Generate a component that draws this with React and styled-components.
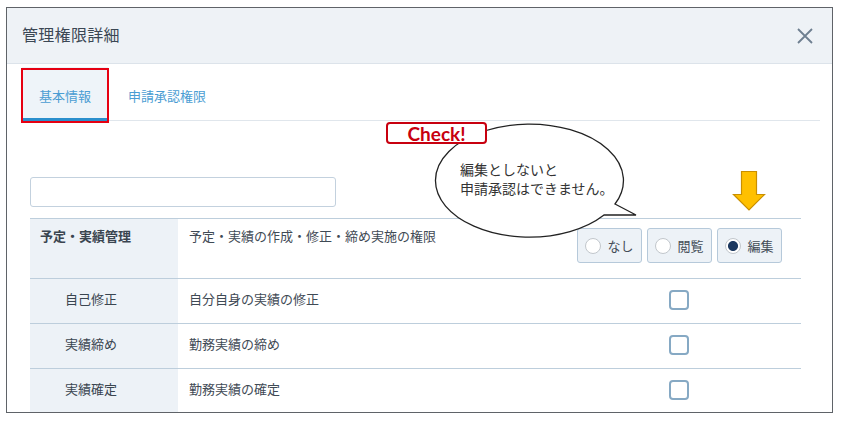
import styled, { createGlobalStyle } from 'styled-components'

const GlobalStyle = createGlobalStyle`
  html, body {
    margin: 0;
    padding: 0;
    background: #ffffff;
  }
  body {
    font-family: "Noto Sans CJK JP", "Noto Sans", sans-serif;
    color: #3f4a55;
  }
  * { box-sizing: border-box; }
`

const rows = [
  { name: '自己修正', desc: '自分自身の実績の修正' },
  { name: '実績締め', desc: '勤務実績の締め' },
  { name: '実績確定', desc: '勤務実績の確定' },
]

const radios = [
  { label: 'なし', checked: false },
  { label: '閲覧', checked: false },
  { label: '編集', checked: true },
]

export default function App() {
  return (
    <Stage>
      <GlobalStyle />
      <Frame>
        <Header>
          <Title>管理権限詳細</Title>
          <Close aria-label="close">
            <svg width="16" height="16" viewBox="0 0 16 16">
              <path d="M1 1L15 15M15 1L1 15" stroke="#6e7f90" strokeWidth="1.8" fill="none" />
            </svg>
          </Close>
        </Header>
        <TabBar>
          <Tab $active>基本情報</Tab>
          <Tab>申請承認権限</Tab>
        </TabBar>
        <Content>
          <SearchInput />
          <Table>
            <Row $tall>
              <NameCell $bold>予定・実績管理</NameCell>
              <DescCell $top>予定・実績の作成・修正・締め実施の権限</DescCell>
              <ControlCell $top>
                <RadioGroup>
                  {radios.map((r) => (
                    <RadioButton key={r.label}>
                      <RadioDot $checked={r.checked} />
                      {r.label}
                    </RadioButton>
                  ))}
                </RadioGroup>
              </ControlCell>
            </Row>
            {rows.map((r) => (
              <Row key={r.name}>
                <NameCell $sub>{r.name}</NameCell>
                <DescCell>{r.desc}</DescCell>
                <ControlCell>
                  <CheckBox />
                </ControlCell>
              </Row>
            ))}
          </Table>
        </Content>
      </Frame>

      {/* annotations drawn over the screenshot */}
      <TabMark />
      <Bubble>
        <svg width="843" height="422" viewBox="0 0 843 422">
          <path
            d="M615 204 L636 215 L604 215 A94 56.5 0 1 1 615 204 Z"
            fill="#ffffff"
            stroke="#222222"
            strokeWidth="1.3"
          />
        </svg>
        <BubbleText>
          編集としないと
          <br />
          申請承認はできません。
        </BubbleText>
      </Bubble>
      <CheckTag>Check!</CheckTag>
      <Arrow>
        <svg width="34" height="42" viewBox="0 0 34 42">
          <path
            d="M9.5 1.5 H24.5 V24.5 H32.5 L17 40 L1.5 24.5 H9.5 Z"
            fill="#ffc000"
            stroke="#c98f00"
            strokeWidth="1.2"
          />
        </svg>
      </Arrow>
    </Stage>
  )
}

const Stage = styled.div`
  position: relative;
  width: 843px;
  height: 422px;
  padding: 7px 0 0 6px;
  overflow: hidden;
`

const Frame = styled.div`
  width: 827px;
  height: 406px;
  border: 1px solid #5f6368;
  overflow: hidden;
  background: #ffffff;
`

const Header = styled.div`
  height: 56px;
  display: flex;
  align-items: center;
  justify-content: space-between;
  padding: 0 19px 3px 15px;
  background: #eef2f6;
  border-bottom: 1px solid #dce3ea;
`

const Title = styled.div`
  font-size: 16px;
  color: #3b4754;
  letter-spacing: 0.3px;
`

const Close = styled.div`
  width: 16px;
  height: 16px;
  display: flex;
  margin-top: 3px;
`

const TabBar = styled.div`
  display: flex;
  gap: 3px;
  margin: 0 12px 0 15px;
  padding-top: 3px;
  border-bottom: 1px solid #e0e6ec;
`

const Tab = styled.div`
  height: 54px;
  display: flex;
  align-items: center;
  padding: 6px 17px 0;
  margin-bottom: -1px;
  font-size: 13px;
  color: #4a9dd3;
  background: ${(p) => (p.$active ? '#eef4f9' : 'transparent')};
  border-bottom: 3px solid ${(p) => (p.$active ? '#2a8fcd' : 'transparent')};
`

const Content = styled.div`
  padding: 0 24px 0 23px;
`

const SearchInput = styled.div`
  margin-top: 56px;
  width: 306px;
  height: 30px;
  border: 1px solid #c3d1de;
  border-radius: 3px;
  background: #ffffff;
`

const Table = styled.div`
  margin-top: 11px;
  width: 771px;
`

const Row = styled.div`
  display: grid;
  grid-template-columns: 148px 399px 224px;
  height: ${(p) => (p.$tall ? '60px' : '45px')};
  border-top: 1px solid #bdcedc;
`

const NameCell = styled.div`
  background: #edf2f7;
  display: flex;
  align-items: ${(p) => (p.$bold ? 'flex-start' : 'center')};
  padding: ${(p) => (p.$bold ? '7px 0 0 10px' : p.$sub ? '0 0 6px 35px' : '0 0 6px 10px')};
  font-size: 13px;
  font-weight: ${(p) => (p.$bold ? 700 : 400)};
  color: #3a4550;
`

const DescCell = styled.div`
  display: flex;
  align-items: ${(p) => (p.$top ? 'flex-start' : 'center')};
  padding: ${(p) => (p.$top ? '7px 0 0 11px' : '0 0 6px 11px')};
  font-size: 13px;
  color: #3f4a55;
`

const ControlCell = styled.div`
  display: flex;
  justify-content: center;
  align-items: ${(p) => (p.$top ? 'flex-start' : 'center')};
  padding: ${(p) => (p.$top ? '9px 20px 0 0' : '0 20px 3px 0')};
`

const RadioGroup = styled.div`
  display: flex;
  gap: 5px;
`

const RadioButton = styled.div`
  width: 65px;
  height: 35px;
  display: flex;
  align-items: center;
  gap: 7px;
  padding-left: 7px;
  background: #edf2f7;
  border: 1px solid #b6c9da;
  border-radius: 3px;
  font-size: 13px;
  color: #444d57;
`

const RadioDot = styled.span`
  width: 16px;
  height: 16px;
  border-radius: 50%;
  border: 1px solid #c2c7cc;
  background: ${(p) =>
    p.$checked ? 'radial-gradient(circle, #1d3960 0 4.6px, #ffffff 5.4px)' : '#ffffff'};
  flex-shrink: 0;
`

const CheckBox = styled.span`
  width: 20px;
  height: 20px;
  border: 2px solid #86a9c4;
  border-radius: 4px;
  background: #ffffff;
`

const TabMark = styled.div`
  position: absolute;
  left: 21px;
  top: 68px;
  width: 88px;
  height: 55px;
  border: 2px solid #e60012;
  pointer-events: none;
`

const Bubble = styled.div`
  position: absolute;
  left: 0;
  top: 0;
  width: 843px;
  height: 422px;
  pointer-events: none;

  svg {
    position: absolute;
    left: 0;
    top: 0;
  }
`

const BubbleText = styled.div`
  position: absolute;
  left: 460px;
  top: 160px;
  font-size: 14px;
  line-height: 19px;
  color: #333333;
`

const CheckTag = styled.div`
  position: absolute;
  left: 386px;
  top: 122px;
  width: 101px;
  height: 22px;
  display: flex;
  align-items: center;
  justify-content: center;
  border: 2px solid #c8000f;
  border-radius: 4px;
  background: #ffffff;
  font-family: Lato, "Open Sans", sans-serif;
  font-weight: 700;
  font-size: 19px;
  line-height: 1;
  color: #c8000f;
`

const Arrow = styled.div`
  position: absolute;
  left: 732px;
  top: 170px;
  width: 34px;
  height: 42px;
`
